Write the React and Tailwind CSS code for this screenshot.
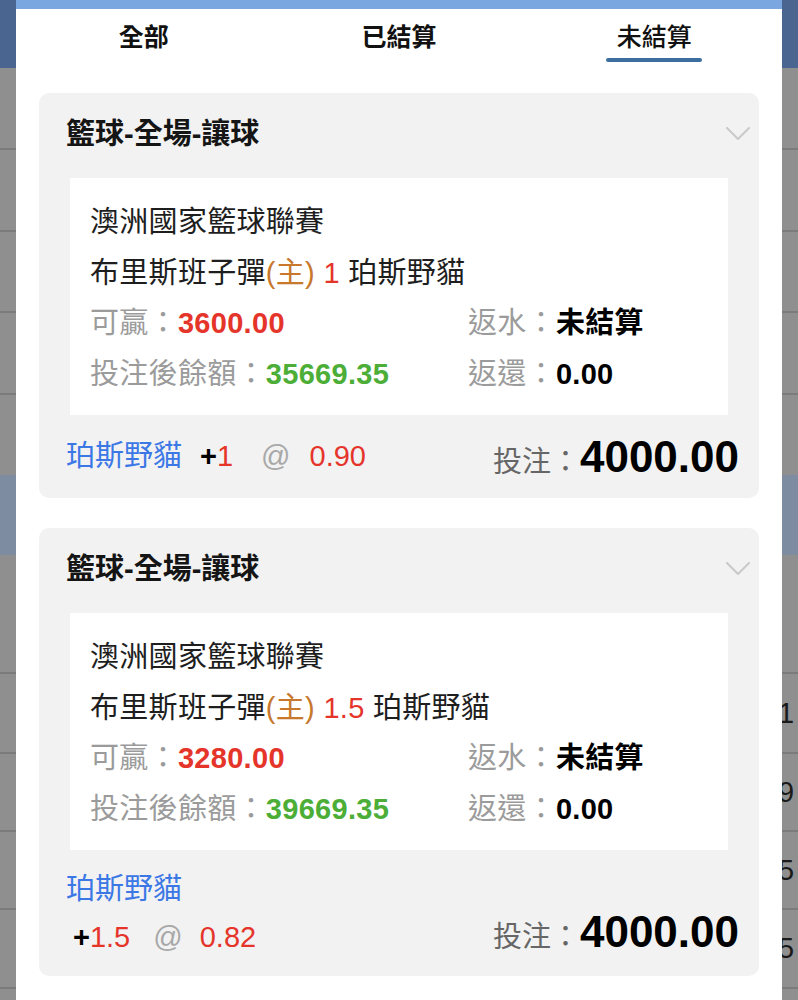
import { useState } from 'react';

const STRIP_ROWS = [
  { h: 68, tone: 'bg-[#4a6590]', line: false },
  { h: 80, tone: 'bg-[#8f8f8f]', line: false },
  { h: 82, tone: 'bg-[#8f8f8f]', line: true },
  { h: 81, tone: 'bg-[#8f8f8f]', line: true },
  { h: 82, tone: 'bg-[#8f8f8f]', line: true },
  { h: 82, tone: 'bg-[#8f8f8f]', line: true },
  { h: 80, tone: 'bg-[#7d8ca0]', line: false },
  { h: 117, tone: 'bg-[#8f8f8f]', line: false },
  { h: 80, tone: 'bg-[#8f8f8f]', line: true, digit: '1' },
  { h: 78, tone: 'bg-[#8f8f8f]', line: true, digit: '9' },
  { h: 78, tone: 'bg-[#8f8f8f]', line: true, digit: '5' },
  { h: 79, tone: 'bg-[#8f8f8f]', line: true, digit: '5' },
  { h: 13, tone: 'bg-[#8f8f8f]', line: true },
];

const BETS = [
  { id: 1, handicap: '1', win: '3600.00', balance: '35669.35', line: '+', lineNum: '1', odds: '0.90', stacked: false },
  { id: 2, handicap: '1.5', win: '3280.00', balance: '39669.35', line: '+', lineNum: '1.5', odds: '0.82', stacked: true },
];

const Strip = ({ showDigits }) => (
  <div className="w-[16px] shrink-0 flex flex-col overflow-hidden">
    {STRIP_ROWS.map((row, i) => (
      <div
        key={i}
        style={{ height: row.h }}
        className={`${row.tone} ${row.line ? 'border-t-2 border-[#7b7b7b]' : ''} flex items-center shrink-0`}
      >
        {showDigits && row.digit && (
          <span className="-ml-[4px] text-[29px] leading-none text-[#1a1a1a]">{row.digit}</span>
        )}
      </div>
    ))}
  </div>
);

const Chevron = () => (
  <svg width="24" height="14" viewBox="0 0 24 14" fill="none" className="shrink-0">
    <polyline points="1,1 12,12 23,1" stroke="#c9c9c9" strokeWidth="2" strokeLinecap="round" strokeLinejoin="round" />
  </svg>
);

const Stake = () => (
  <div className="flex items-baseline">
    <span className="text-[29px] text-[#666]">投注：</span>
    <span className="text-[44px] font-bold text-black">4000.00</span>
  </div>
);

const OddsLine = ({ bet }) => (
  <div className="flex items-baseline text-[29px]">
    <span className="font-bold text-black">{bet.line}</span>
    <span className="text-[#e5352b]">{bet.lineNum}</span>
    <span className={`${bet.stacked ? 'ml-[23px]' : 'ml-[28px]'} text-[#a8a8a8]`}>@</span>
    <span className={`${bet.stacked ? 'ml-[17px]' : 'ml-[19px]'} text-[#e5352b]`}>{bet.odds}</span>
  </div>
);

const BetCard = ({ bet }) => (
  <div className="rounded-[10px] bg-[#f2f2f2]">
    {/* Header */}
    <div className="flex items-center justify-between pl-[27px] pr-[9px] pt-[21px] pb-[24px]">
      <h3 className="text-[29px] leading-[40px] font-bold text-[#151515]">籃球-全場-讓球</h3>
      <Chevron />
    </div>

    {/* Detail box */}
    <div className="mx-[31px] bg-white px-[20px] pt-[19px] pb-[16px] text-[29px] leading-[50.5px] tracking-[0.3px] text-[#1e1e1e]">
      <p>澳洲國家籃球聯賽</p>
      <p>
        布里斯班子彈<span className="text-[#c7782c]">(主)</span>{' '}
        <span className="text-[#e5352b]">{bet.handicap}</span> 珀斯野貓
      </p>
      <div className="grid grid-cols-[378px_1fr]">
        <p>
          <span className="text-[#9b9b9b]">可贏：</span>
          <span className="font-bold text-[#e5352b]">{bet.win}</span>
        </p>
        <p>
          <span className="text-[#9b9b9b]">返水：</span>
          <span className="font-bold text-black">未結算</span>
        </p>
        <p>
          <span className="text-[#9b9b9b]">投注後餘額：</span>
          <span className="font-bold text-[#4cae37]">{bet.balance}</span>
        </p>
        <p>
          <span className="text-[#9b9b9b]">返還：</span>
          <span className="font-bold text-black">0.00</span>
        </p>
      </div>
    </div>

    {/* Footer */}
    {bet.stacked ? (
      <div className="flex items-end justify-between pl-[27px] pr-[20px] pt-[20px] pb-[17px]">
        <div>
          <p className="text-[29px] leading-[38px] text-[#3b78e6]">珀斯野貓</p>
          <div className="mt-[7px] pl-[7px] leading-[44px]">
            <OddsLine bet={bet} />
          </div>
        </div>
        <div className="leading-[44px]">
          <Stake />
        </div>
      </div>
    ) : (
      <div className="h-[83px] flex items-center justify-between pl-[27px] pr-[20px]">
        <div className="flex items-baseline">
          <span className="text-[29px] text-[#3b78e6]">珀斯野貓</span>
          <span className="ml-[18px]">
            <OddsLine bet={bet} />
          </span>
        </div>
        <Stake />
      </div>
    )}
  </div>
);

const TABS = ['全部', '已結算', '未結算'];

export default function App() {
  const [active, setActive] = useState(2);

  return (
    <div className="h-[1000px] w-full flex overflow-hidden font-['Liberation_Sans','Noto_Sans_CJK_TC',sans-serif]">
      <Strip />

      <div className="flex-1 flex flex-col bg-white">
        <div className="h-[9px] bg-[#7aa7df]" />

        {/* Tabs */}
        <div className="grid grid-cols-3">
          {TABS.map((tab, i) => (
            <button key={tab} onClick={() => setActive(i)} className="flex flex-col items-center pt-[13px]">
              <span className={`text-[25px] leading-[30px] text-[#111] ${i === active ? 'font-medium' : 'font-bold'}`}>
                {tab}
              </span>
              <span className={`mt-[6px] h-[4px] w-[96px] rounded-full ${i === active ? 'bg-[#3c6f9f]' : 'bg-transparent'}`} />
            </button>
          ))}
        </div>

        {/* Bet list */}
        <div className="flex flex-col gap-[30px] px-[23px] pt-[31px]">
          {BETS.map((bet) => (
            <BetCard key={bet.id} bet={bet} />
          ))}
        </div>
      </div>

      <Strip showDigits />
    </div>
  );
}
